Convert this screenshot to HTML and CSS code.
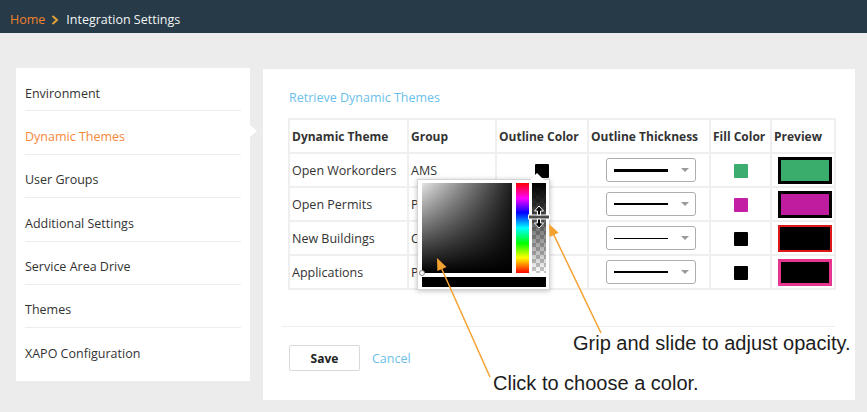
FILE: index.html
```html
<!DOCTYPE html>
<html>
<head>
<meta charset="utf-8">
<link rel="stylesheet" href="styles.css">
</head>
<body>
<header class="topbar">
  <span class="crumb-home">Home</span>
  <svg class="crumb-sep" width="8" height="10" viewBox="0 0 8 10"><polyline points="1.5,1 6,5 1.5,9" fill="none" stroke="#e3a03a" stroke-width="2"/></svg>
  <span class="crumb-current">Integration Settings</span>
</header>

<div class="layout">
  <nav class="sidebar">
    <div class="nav-item">Environment</div>
    <div class="nav-item active">Dynamic Themes</div>
    <div class="nav-item">User Groups</div>
    <div class="nav-item">Additional Settings</div>
    <div class="nav-item">Service Area Drive</div>
    <div class="nav-item">Themes</div>
    <div class="nav-item last">XAPO Configuration</div>
  </nav>

  <main class="panel">
    <section class="themes">
      <div class="title">Retrieve Dynamic Themes</div>
      <table class="grid">
        <colgroup>
          <col class="c1"><col class="c2"><col class="c3"><col class="c4"><col class="c5"><col class="c6">
        </colgroup>
        <thead>
          <tr><th>Dynamic Theme</th><th>Group</th><th>Outline Color</th><th>Outline Thickness</th><th>Fill Color</th><th>Preview</th></tr>
        </thead>
        <tbody>
          <tr>
            <td>Open Workorders</td><td>AMS</td>
            <td class="center"><span class="swatch sw-black"></span></td>
            <td class="center"><div class="select"><span class="line t3"></span><span class="caret"></span></div></td>
            <td class="center"><span class="swatch sw-green"></span></td>
            <td class="center"><div class="preview pv1"></div></td>
          </tr>
          <tr>
            <td>Open Permits</td><td>PERMITS</td>
            <td class="center"><span class="swatch sw-black"></span></td>
            <td class="center"><div class="select"><span class="line t2"></span><span class="caret"></span></div></td>
            <td class="center"><span class="swatch sw-magenta"></span></td>
            <td class="center"><div class="preview pv2"></div></td>
          </tr>
          <tr>
            <td>New Buildings</td><td>CDR</td>
            <td class="center"><span class="swatch sw-red"></span></td>
            <td class="center"><div class="select"><span class="line t1"></span><span class="caret"></span></div></td>
            <td class="center"><span class="swatch sw-black"></span></td>
            <td class="center"><div class="preview pv3"></div></td>
          </tr>
          <tr>
            <td>Applications</td><td>PERMITS</td>
            <td class="center"><span class="swatch sw-pink"></span></td>
            <td class="center"><div class="select"><span class="line t2"></span><span class="caret"></span></div></td>
            <td class="center"><span class="swatch sw-black"></span></td>
            <td class="center"><div class="preview pv4"></div></td>
          </tr>
        </tbody>
      </table>
    </section>
    <div class="actions">
      <button class="btn-save">Save</button>
      <span class="link-cancel">Cancel</span>
    </div>
  </main>
</div>

<div class="picker">
  <div class="picker-body">
    <div class="sv"><span class="sv-dot"></span></div>
    <div class="hue"></div>
    <div class="alpha">
      <div class="alpha-handle">
        <svg width="22" height="24" viewBox="0 0 22 24">
          <rect x="0.5" y="10" width="21" height="4" fill="#4a4a4a" stroke="#fff" stroke-width="1"/>
          <path d="M11 1 L15.5 6 L12.5 6 L12.5 10 L9.5 10 L9.5 6 L6.5 6 Z" fill="#000" stroke="#fff" stroke-width="1"/>
          <path d="M11 23 L15.5 18 L12.5 18 L12.5 14 L9.5 14 L9.5 18 L6.5 18 Z" fill="#000" stroke="#fff" stroke-width="1"/>
        </svg>
      </div>
    </div>
  </div>
  <div class="picker-current"></div>
</div>

<svg class="annotations" width="867" height="412" viewBox="0 0 867 412">
  <line x1="490" y1="377" x2="440" y2="265" stroke="#f3a230" stroke-width="1.5"/>
  <polygon points="437,258 437.4,270.9 446.5,266.9" fill="#f3a230"/>
  <line x1="601" y1="333" x2="552" y2="231" stroke="#f3a230" stroke-width="1.5"/>
  <polygon points="549,224 549.6,236.9 558.6,232.7" fill="#f3a230"/>
</svg>
<div class="note note-opacity">Grip and slide to adjust opacity.</div>
<div class="note note-color">Click to choose a color.</div>
</body>
</html>
```

FILE: styles.css
```css
* { box-sizing: border-box; }

body {
  margin: 0;
  width: 867px;
  height: 412px;
  overflow: hidden;
  position: relative;
  background: #ececec;
  font-family: "Open Sans", "DejaVu Sans", sans-serif;
  font-size: 12.5px;
  color: #333;
}

/* header */
.topbar {
  height: 33px;
  background: #263a48;
  display: flex;
  align-items: flex-start;
  padding: 11px 0 0 10px;
  line-height: 17px;
}
.crumb-home { color: #f0832e; }
.crumb-sep { margin: 4px 7px 0 6px; }
.crumb-current { color: #f4f4f4; }

/* layout */
.layout {
  display: flex;
  align-items: flex-start;
  gap: 13px;
  padding: 35px 0 0 16px;
}

.sidebar {
  position: relative;
  width: 234px;
  height: 313px;
  background: #fff;
  padding: 0 9px;
}
.sidebar::after {
  content: "";
  position: absolute;
  right: -7px;
  top: 57px;
  border-left: 7px solid #fff;
  border-top: 6.5px solid transparent;
  border-bottom: 6.5px solid transparent;
}
.nav-item {
  height: 43.4px;
  padding-top: 16.5px;
  line-height: 17px;
  border-bottom: 1px solid #ededed;
  color: #333;
}
.nav-item.active { color: #f5873a; }
.nav-item.last { border-bottom: none; }

.panel {
  margin-top: 1px;
  width: 592px;
  height: 331px;
  background: #fff;
  padding: 0 20px 0 19px;
}

.themes { padding: 20px 0 0 6px; }
.title {
  color: #6cbfea;
  line-height: 17px;
  padding-left: 1px;
  margin-bottom: 12px;
}

.grid {
  border-collapse: separate;
  border-spacing: 2px;
  background: #efefef;
  table-layout: fixed;
  width: 548px;
}
.c1 { width: 117px; }
.c2 { width: 86px; }
.c3 { width: 90px; }
.c4 { width: 120px; }
.c5 { width: 59px; }
.c6 { width: 62px; }

.grid th, .grid td {
  background: #fff;
  height: 32px;
  padding: 0 2px;
  text-align: left;
  vertical-align: middle;
  white-space: nowrap;
  overflow: hidden;
}
.grid th {
  font-size: 12px;
  font-weight: 700;
  color: #333;
}
.grid td { color: #333; }
.grid td.center { text-align: center; padding: 0; }

.swatch {
  display: inline-block;
  width: 14px;
  height: 14px;
  border-radius: 1px;
  vertical-align: middle;
}
.sw-black { background: #000; }
.sw-green { background: #3cad6e; }
.sw-magenta { background: #c21fa5; }
.sw-red { background: #e3161b; }
.sw-pink { background: #e8368d; }

.select {
  display: inline-flex;
  align-items: center;
  width: 90px;
  height: 24px;
  margin-left: 3px;
  border: 1px solid #adadad;
  border-radius: 3px;
  padding: 0 6px 0 7px;
  vertical-align: middle;
  background: #fff;
}
.line {
  display: block;
  width: 54px;
  background: #000;
}
.line.t3 { height: 3px; }
.line.t2 { height: 2px; }
.line.t1 { height: 1px; }
.caret {
  margin-left: auto;
  width: 0;
  height: 0;
  border-left: 4px solid transparent;
  border-right: 4px solid transparent;
  border-top: 4px solid #9a9a9a;
}

.preview {
  display: inline-block;
  width: 54px;
  height: 27px;
  vertical-align: middle;
  margin-left: 3px;
}
.pv1 { background: #3aac6c; border: 3px solid #000; }
.pv2 { background: #c01ca0; border: 3px solid #000; }
.pv3 { background: #000; border: 2px solid #dc1818; }
.pv4 { background: #000; border: 3px solid #e6358e; }

.actions {
  margin-top: 36px;
  border-top: 1px solid #eeeeee;
  padding: 18px 0 0 7px;
  display: flex;
  align-items: center;
  gap: 12px;
}
.btn-save {
  width: 71px;
  height: 26px;
  background: #fff;
  border: 1px solid #d9d9d9;
  border-radius: 2px;
  font-family: "Open Sans", sans-serif;
  font-size: 12px;
  font-weight: 700;
  color: #222;
  padding: 0;
}
.link-cancel { color: #6cbfea; margin-top: 1px; }

/* colour picker overlay */
.picker {
  position: absolute;
  left: 417px;
  top: 179px;
  width: 133px;
  height: 111px;
  background: #fff;
  border: 1px solid #d5d5d5;
  box-shadow: 0 1px 5px rgba(0, 0, 0, 0.25);
  padding: 3px 3px 2px 4px;
}
.picker::before {
  content: "";
  position: absolute;
  left: 112px;
  top: -7px;
  border-bottom: 7px solid #fff;
  border-left: 7px solid transparent;
  border-right: 7px solid transparent;
}
.picker-body {
  display: flex;
  height: 90px;
}
.sv {
  position: relative;
  width: 90px;
  height: 90px;
  background:
    linear-gradient(to bottom, rgba(0,0,0,0), #000),
    linear-gradient(to right, #e4e4e4, #1e1e1e);
}
.sv-dot {
  position: absolute;
  left: -3px;
  bottom: -3px;
  width: 6px;
  height: 6px;
  border: 1px solid #888;
  border-radius: 50%;
  background: #fff;
}
.hue {
  width: 13px;
  height: 90px;
  margin-left: 4px;
  background: linear-gradient(to bottom, #ff0000 0%, #ff00ff 17%, #0000ff 33%, #00ffff 50%, #00ff00 67%, #ffff00 83%, #ff0000 100%);
}
.alpha {
  position: relative;
  width: 14px;
  height: 90px;
  margin-left: 3px;
  background-color: #fff;
  background-image:
    linear-gradient(to bottom, #000 0%, rgba(0,0,0,0.85) 20%, rgba(0,0,0,0) 100%),
    linear-gradient(45deg, #c8c8c8 25%, transparent 25%, transparent 75%, #c8c8c8 75%),
    linear-gradient(45deg, #c8c8c8 25%, transparent 25%, transparent 75%, #c8c8c8 75%);
  background-size: 100% 100%, 8px 8px, 8px 8px;
  background-position: 0 0, 0 0, 4px 4px;
}
.alpha-handle {
  position: absolute;
  left: -4px;
  top: 22px;
  width: 22px;
  height: 24px;
}
.alpha-handle svg { display: block; }
.picker-current {
  margin-top: 4px;
  width: 124px;
  height: 10px;
  background: #000;
}

/* annotations */
.annotations {
  position: absolute;
  left: 0;
  top: 0;
  pointer-events: none;
}
.note {
  position: absolute;
  font-family: "Liberation Sans", Arial, sans-serif;
  font-size: 20px;
  line-height: 23px;
  color: #1d1d1d;
  white-space: nowrap;
}
.note-opacity { left: 573px; top: 332px; }
.note-color { left: 493px; top: 372px; }
```
